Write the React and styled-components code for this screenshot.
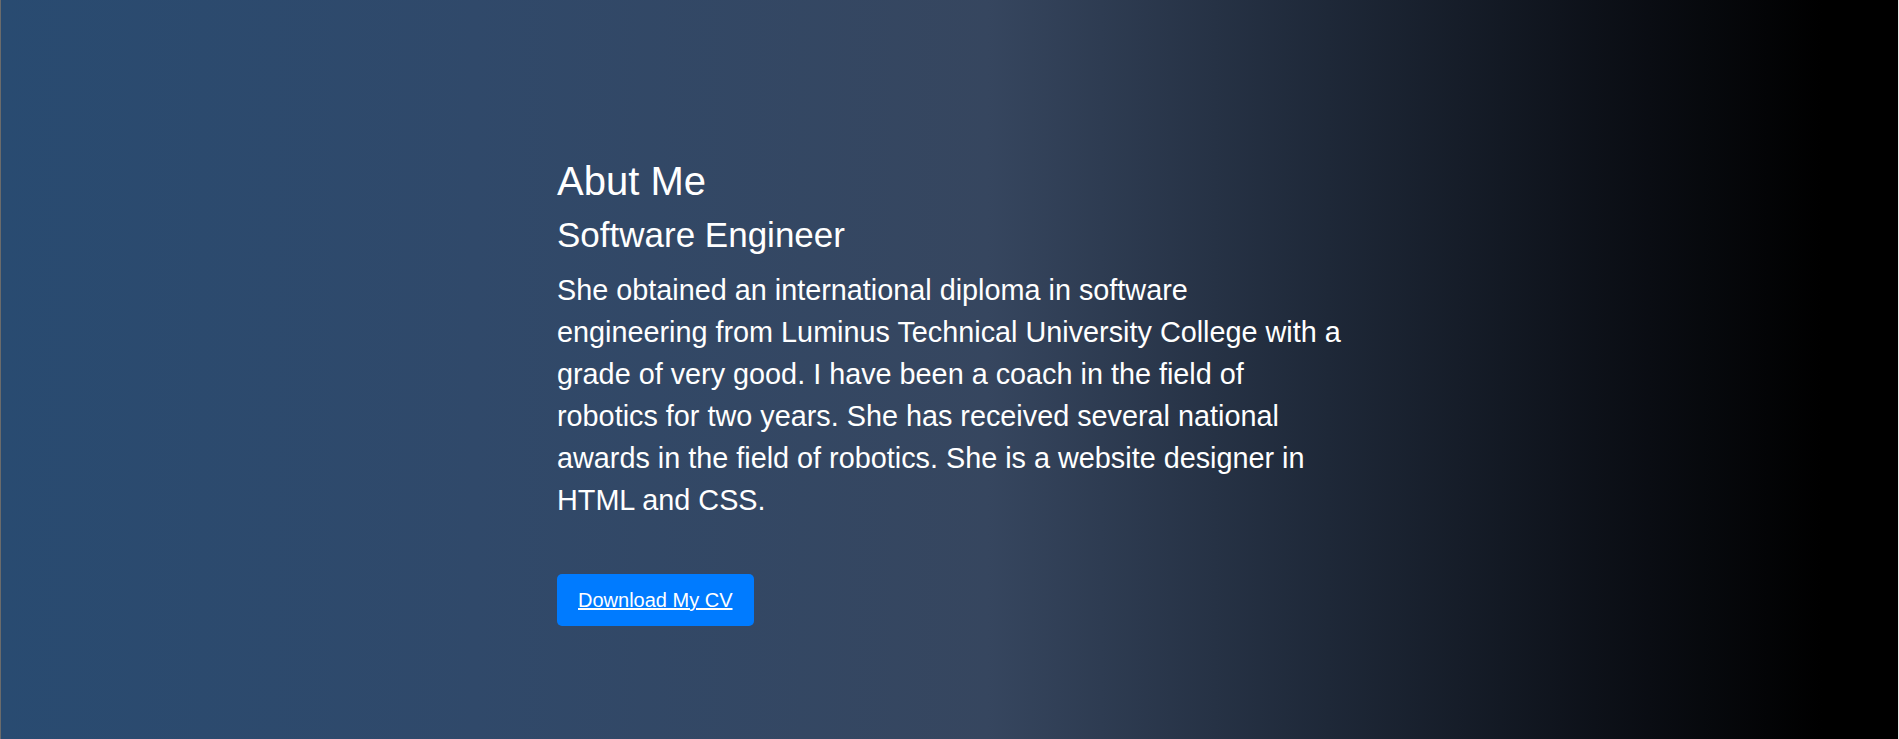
import React from 'react';
import styled, {createGlobalStyle} from 'styled-components';

const GlobalStyle = createGlobalStyle`
    * {
        box-sizing: border-box;
    }
    html, body {
        margin: 0;
        padding: 0;
    }
    body {
        font-family: 'Liberation Sans', Arial, sans-serif;
        color: #fff;
        background: #000;
    }
`;

const Section = styled.section`
    height: 100vh;
    overflow: hidden;
    border-left: 1px solid #6b6b6b;
    border-right: 1px solid #e6e6e6;
    background: linear-gradient(to right, #294b71 0%, #30496a 25%, #36465f 52%, #1e2838 70%, #0d1119 84%, #000 96%);
    display: flex;
    justify-content: center;
    padding-top: 157px;
`;

const Content = styled.div`
    width: 785px;
`;

const Title = styled.h1`
    margin: 0 0 9px;
    font-size: 40px;
    font-weight: 400;
    line-height: 1.2;
`;

const Subtitle = styled.h2`
    margin: 0 0 13px;
    font-size: 35px;
    font-weight: 400;
    line-height: 1.2;
`;

const Text = styled.p`
    margin: 0 0 53px;
    font-size: 28.8px;
    line-height: 42px;
`;

const Button = styled.a`
    display: inline-block;
    padding: 14px 21px;
    font-size: 20px;
    line-height: 24px;
    color: #fff;
    background: #007bff;
    border-radius: 5px;
    text-decoration: underline;
    cursor: pointer;
`;

export default function App() {
    return (
        <>
            <GlobalStyle/>
            <Section>
                <Content>
                    <Title>Abut Me</Title>
                    <Subtitle>Software Engineer</Subtitle>
                    <Text>
                        She obtained an international diploma in software engineering from Luminus Technical
                        University College with a grade of very good. I have been a coach in the field of robotics
                        for two years. She has received several national awards in the field of robotics. She is a
                        website designer in HTML and CSS.
                    </Text>
                    <Button href="#">Download My CV</Button>
                </Content>
            </Section>
        </>
    );
}
